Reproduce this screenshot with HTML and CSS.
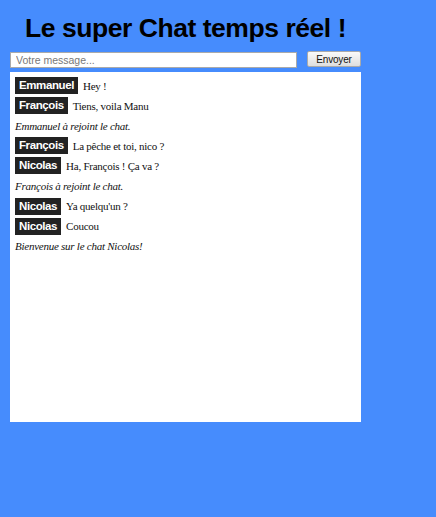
FILE: index.html
```html
<!DOCTYPE html>
<html lang="fr">
<head>
<meta charset="utf-8">
<title>Super Chat</title>
<link rel="stylesheet" href="styles.css">
</head>
<body>
<div class="page">
  <h1 class="title">Le super Chat temps réel !</h1>
  <form class="send-form">
    <input class="msg-input" type="text" placeholder="Votre message...">
    <button class="send-btn" type="button">Envoyer</button>
  </form>
  <section class="chat">
    <p class="msg"><strong class="name">Emmanuel</strong><span class="text">Hey !</span></p>
    <p class="msg"><strong class="name">François</strong><span class="text">Tiens, voila Manu</span></p>
    <p class="info">Emmanuel à rejoint le chat.</p>
    <p class="msg"><strong class="name">François</strong><span class="text">La pêche et toi, nico ?</span></p>
    <p class="msg"><strong class="name">Nicolas</strong><span class="text">Ha, François ! Ça va ?</span></p>
    <p class="info">François à rejoint le chat.</p>
    <p class="msg"><strong class="name">Nicolas</strong><span class="text">Ya quelqu'un ?</span></p>
    <p class="msg"><strong class="name">Nicolas</strong><span class="text">Coucou</span></p>
    <p class="info">Bienvenue sur le chat Nicolas!</p>
  </section>
</div>
</body>
</html>
```

FILE: styles.css
```css
html, body {
  margin: 0;
  padding: 0;
}
body {
  background: #468cfd;
  font-family: "Liberation Serif", "Times New Roman", serif;
  min-height: 517px;
}
.page {
  width: 351px;
  padding: 0 0 0 10px;
}
.title {
  margin: 0;
  padding-top: 12px;
  box-sizing: border-box;
  height: 50px;
  font-family: "Liberation Sans", Arial, sans-serif;
  font-weight: bold;
  font-size: 26.5px;
  letter-spacing: -0.45px;
  line-height: 32px;
  text-align: center;
  white-space: nowrap;
  color: #000;
}
.send-form {
  display: flex;
  align-items: flex-start;
  justify-content: space-between;
  height: 21px;
  margin-top: 1px;
}
.msg-input {
  box-sizing: border-box;
  width: 287px;
  height: 16px;
  margin: 1px 0 0 0;
  padding: 0 5px;
  border: 1px solid #aaa;
  background: #fff;
  font-family: "Liberation Sans", Arial, sans-serif;
  font-size: 10.5px;
}
.msg-input::placeholder {
  color: #777;
}
.send-btn {
  box-sizing: border-box;
  width: 54px;
  height: 16px;
  margin: 0;
  padding: 0;
  border: 1px solid #aaa;
  border-radius: 2px;
  background: linear-gradient(#fafafa, #dedede);
  font-family: "Liberation Sans", Arial, sans-serif;
  font-size: 10px;
  letter-spacing: -0.2px;
  color: #111;
}
.chat {
  box-sizing: border-box;
  width: 351px;
  height: 350px;
  background: #fff;
  padding: 5px 5px;
  display: flex;
  flex-direction: column;
  gap: 3.1px;
}
.msg, .info {
  margin: 0;
  min-height: 17px;
  display: flex;
  align-items: center;
  font-size: 11px;
  letter-spacing: -0.25px;
  color: #111;
}
.info {
  font-style: italic;
}
.name {
  background: #222;
  color: #fff;
  font-family: "Liberation Sans", Arial, sans-serif;
  font-weight: bold;
  font-size: 11.5px;
  letter-spacing: -0.4px;
  line-height: 17px;
  padding: 0 4px;
  margin-right: 5px;
}
```
